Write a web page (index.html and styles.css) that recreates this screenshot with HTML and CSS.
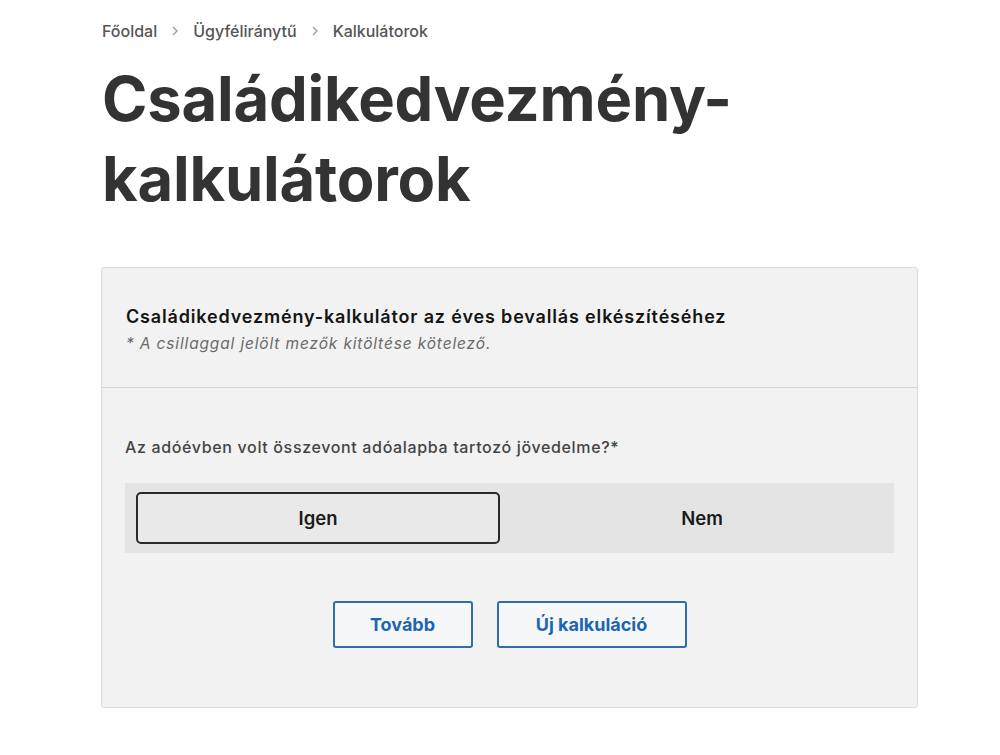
FILE: index.html
```html
<!DOCTYPE html>
<html lang="hu">
<head>
<meta charset="utf-8">
<title>Családikedvezmény-kalkulátorok</title>
<link rel="stylesheet" href="styles.css">
</head>
<body>
<div class="page">
  <nav class="crumbs">
    <a href="#">Főoldal</a>
    <span class="sep"><svg width="8" height="12" viewBox="0 0 8 12"><path d="M2 2l4 4-4 4" fill="none" stroke="#9a9a9a" stroke-width="1.3"/></svg></span>
    <a href="#">Ügyféliránytű</a>
    <span class="sep"><svg width="8" height="12" viewBox="0 0 8 12"><path d="M2 2l4 4-4 4" fill="none" stroke="#9a9a9a" stroke-width="1.3"/></svg></span>
    <span class="current">Kalkulátorok</span>
  </nav>
  <h1 class="title">Családikedvezmény-<br>kalkulátorok</h1>
  <section class="card">
    <header class="card-head">
      <h2 class="card-title">Családikedvezmény-kalkulátor az éves bevallás elkészítéséhez</h2>
      <p class="card-note">* A csillaggal jelölt mezők kitöltése kötelező.</p>
    </header>
    <div class="card-body">
      <p class="question">Az adóévben volt összevont adóalapba tartozó jövedelme?*</p>
      <div class="toggle">
        <button class="opt active">Igen</button>
        <button class="opt">Nem</button>
      </div>
      <div class="actions">
        <button class="btn btn-next">Tovább</button>
        <button class="btn btn-new">Új kalkuláció</button>
      </div>
    </div>
  </section>
</div>
</body>
</html>
```

FILE: styles.css
```css
* { box-sizing: border-box; }
html, body { margin: 0; padding: 0; background: #fff; }
body { font-family: Inter, "Noto Sans", "Liberation Sans", sans-serif; color: #333; }
.page { padding: 21px 0 0 102px; width: 917px; }
.crumbs { display: flex; align-items: center; gap: 10px; font-size: 16px; font-weight: 500; color: #555; height: 20px; }
.crumbs a { color: #555; text-decoration: none; }
.crumbs .sep { display: flex; align-items: center; width: 14px; justify-content: center; margin: 0 1px; }
.crumbs .current { color: #555; }
.title { margin: 18px 0 0 0; font-size: 61.5px; line-height: 80px; font-weight: 700; color: #333; letter-spacing: -0.2px; }
.card { margin: 48px 0 0 -1px; width: 817px; background: #f2f2f2; border: 1px solid #dcdcdc; border-radius: 3px; }
.card-head { padding: 38px 24px 34px 24px; border-bottom: 1px solid #d6d6d6; }
.card-title { margin: 0; font-size: 18px; line-height: 22px; font-weight: 600; color: #151515; letter-spacing: 0.84px; }
.card-note { margin: 7px 0 0 0; font-size: 15.5px; line-height: 18px; font-style: italic; color: #6a6a6a; letter-spacing: 0.85px; }
.card-body { padding: 49px 23px 59px 23px; }
.question { margin: 0; font-size: 16px; line-height: 20px; font-weight: 500; color: #444; letter-spacing: 0.65px; }
.toggle { margin-top: 26px; display: grid; grid-template-columns: 364px 1fr; column-gap: 10px; background: #e4e4e4; padding: 9px 0 9px 11px; height: 70px; }
.opt { font-family: inherit; font-size: 18.5px; font-weight: 600; color: #1a1a1a; background: transparent; border: 0; border-radius: 5px; cursor: pointer; }
.opt.active { background: #e9e9e9; border: 2px solid #2a2a2a; }
.actions { margin-top: 48px; display: flex; justify-content: center; gap: 24px; }
.btn { font-family: inherit; font-size: 18px; font-weight: 700; color: #1c66b0; background: #f5f7f9; border: 2px solid #2f6ea9; border-radius: 3px; height: 47px; padding: 0; cursor: pointer; }
.btn-next { width: 140px; }
.btn-new { width: 190px; }
```
